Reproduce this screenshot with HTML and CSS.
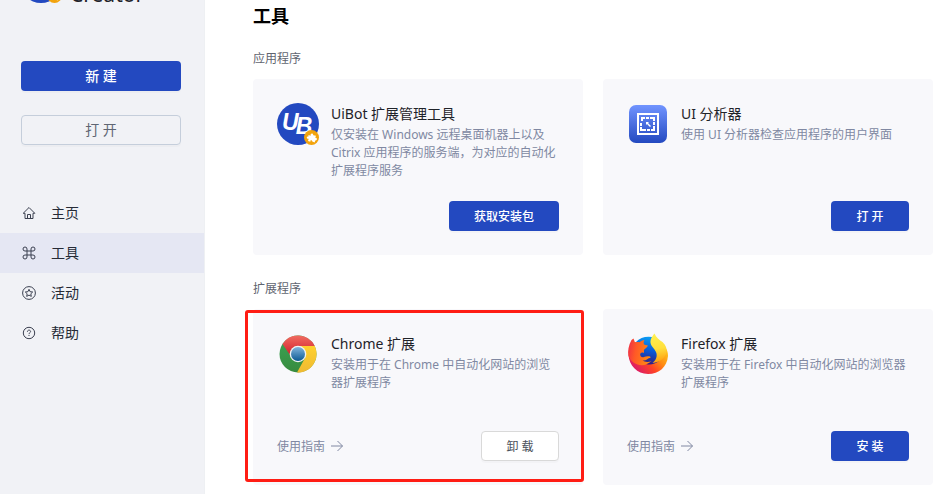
FILE: index.html
```html
<!DOCTYPE html>
<html lang="zh-CN">
<head>
<meta charset="utf-8">
<meta name="viewport" content="width=device-width, initial-scale=1">
<title>Creator</title>
<link rel="stylesheet" href="styles.css">
</head>
<body>
<svg class="defs" aria-hidden="true">
  <defs>
    <symbol id="arrow" viewBox="0 0 12 12">
      <path d="M0 6h11.500M6.500 1l5 5-5 5" fill="none" stroke="currentColor"/>
    </symbol>
    <symbol id="ubot" viewBox="0 0 42 42">
      <circle cx="21" cy="21" r="21" fill="#2349c0"/>
      <text x="5" y="27" class="ubot-text">U<tspan dx="-3" dy="4">B</tspan></text>
      <circle cx="34.500" cy="34.500" r="7.500" fill="#f2a30d"/>
      <path d="M31.500 32l2.200.8c-.8-2.500 2.500-3.200 2.600-.6l2.700.5-.8 2.100c2.300-.2 2.300 2.800.1 2.600l-.7 2-2.300-.9c-.3-1.800-2.300-1.500-1.900.2l-2.400-.7.700-2.200c-2.500.2-2.500-2.400-.2-2.200z" fill="#fff"/>
    </symbol>
  </defs>
</svg>
<div class="app">
  <aside class="sidebar">
    <div class="brand">
      <svg class="brand-logo" aria-hidden="true"><use href="#ubot"/></svg>
      <span class="brand-name">Creator</span>
    </div>
    <div class="actions">
      <button class="btn btn-primary btn-wide" type="button">新 建</button>
      <button class="btn btn-ghost btn-wide" type="button">打 开</button>
    </div>
    <nav class="nav">
      <a class="nav-item" href="#home">
        <svg class="nav-icon" viewBox="0 0 14 14"><path d="M1.200 7.300H3v5.200h8V7.300h1.800L7 1.500zM5.500 12.500V8.500h3v4"/></svg>
        主页
      </a>
      <a class="nav-item active" href="#tools" aria-current="page">
        <svg class="nav-icon" viewBox="0 0 14 14"><path d="M5 5H3a2 2 0 1 1 2-2v8a2 2 0 1 1-2-2h8a2 2 0 1 1-2 2V3a2 2 0 1 1 2 2z"/></svg>
        工具
      </a>
      <a class="nav-item" href="#events">
        <svg class="nav-icon" viewBox="0 0 14 14"><circle cx="7" cy="7" r="6.400"/><path d="M7 3.300l1.100 2.400 2.600.3-1.900 1.800.5 2.600L7 9.100l-2.300 1.300.5-2.600L3.300 6l2.600-.3z"/></svg>
        活动
      </a>
      <a class="nav-item" href="#help">
        <svg class="nav-icon" viewBox="0 0 14 14"><circle cx="7" cy="7" r="5.700"/><path d="M5.400 5.700c0-2.100 3.200-2.100 3.200-.1 0 1.100-1.600 1.100-1.600 2.500M7 9v1"/></svg>
        帮助
      </a>
    </nav>
  </aside>
  <main class="main">
    <h1 class="page-title">工具</h1>
    <section class="section">
      <h2 class="section-title">应用程序</h2>
      <div class="cards">
        <article class="card">
          <div class="card-body">
            <svg class="card-icon" aria-hidden="true"><use href="#ubot"/></svg>
            <div class="card-text">
              <h3 class="card-title">UiBot 扩展管理工具</h3>
              <p class="card-desc">仅安装在 Windows 远程桌面机器上以及 Citrix 应用程序的服务端，为对应的自动化扩展程序服务</p>
            </div>
          </div>
          <div class="card-foot">
            <button class="btn btn-primary" type="button">获取安装包</button>
          </div>
        </article>
        <article class="card">
          <div class="card-body">
            <svg class="card-icon" viewBox="0 0 42 42" aria-hidden="true">
              <defs><linearGradient id="tile" x2="0" y2="1"><stop stop-color="#7194ff"/><stop offset="1" stop-color="#2349c0"/></linearGradient></defs>
              <rect x="2" y="2" width="38" height="38" rx="7" fill="url(#tile)"/>
              <rect x="11" y="11" width="20" height="20" fill="none" stroke="#fff" stroke-width="2"/>
              <path d="M15 18v-3h3m1 0h3m1 0h4v3m0 1v3m0 1v4h-3m-1 0h-3m-1 0h-5v-3m0-1v-3" fill="none" stroke="#fff" stroke-width="2"/>
              <path d="M19 19h3l-1 1 3 3-1 1-3-3-1 1z" fill="#fff"/>
            </svg>
            <div class="card-text">
              <h3 class="card-title">UI 分析器</h3>
              <p class="card-desc">使用 UI 分析器检查应用程序的用户界面</p>
            </div>
          </div>
          <div class="card-foot">
            <button class="btn btn-primary" type="button">打 开</button>
          </div>
        </article>
      </div>
    </section>
    <section class="section">
      <h2 class="section-title">扩展程序</h2>
      <div class="cards">
        <article class="card highlighted">
          <div class="card-body">
            <svg class="card-icon" viewBox="0 0 42 42" aria-hidden="true">
              <defs>
                <linearGradient id="cr" x2="0" y2="1"><stop stop-color="#f06b60"/><stop offset="1" stop-color="#d3202c"/></linearGradient>
                <linearGradient id="cg" x2="0" y2="1"><stop stop-color="#3aa757"/><stop offset="1" stop-color="#388a3e"/></linearGradient>
                <linearGradient id="cy" x2="0" y2="1"><stop stop-color="#ffd02e"/><stop offset="1" stop-color="#efba32"/></linearGradient>
                <linearGradient id="cb" x2="0" y2="1"><stop stop-color="#80b4dc"/><stop offset="1" stop-color="#0c5a94"/></linearGradient>
              </defs>
              <circle cx="21" cy="21" r="18.500" fill="url(#cg)"/>
              <path d="M21 13h16.700A18.500 18.500 0 0 1 20 39.500l8-14.500z" fill="url(#cy)"/>
              <path d="M5.500 11A18.500 18.500 0 0 1 37.700 13H21a8 8 0 0 0-8 9z" fill="url(#cr)"/>
              <circle cx="21" cy="21" r="8.300" fill="#f3f3f5"/>
              <circle cx="21" cy="21" r="7" fill="url(#cb)"/>
            </svg>
            <div class="card-text">
              <h3 class="card-title">Chrome 扩展</h3>
              <p class="card-desc">安装用于在 Chrome 中自动化网站的浏览器扩展程序</p>
            </div>
          </div>
          <div class="card-foot">
            <a class="guide" href="#chrome-guide">使用指南 <svg class="arrow" aria-hidden="true"><use href="#arrow"/></svg></a>
            <button class="btn btn-default" type="button">卸 载</button>
          </div>
        </article>
        <article class="card">
          <div class="card-body">
            <svg class="card-icon" viewBox="0 0 42 42" aria-hidden="true">
              <defs>
                <linearGradient id="fo" x1=".9" y1=".2" x2=".15" y2=".75"><stop stop-color="#ffc21a"/><stop offset=".35" stop-color="#ff8a12"/><stop offset=".65" stop-color="#ff4326"/><stop offset="1" stop-color="#e0205e"/></linearGradient>
                <linearGradient id="fb" x1=".6" x2=".4" y2="1"><stop stop-color="#0aa2f5"/><stop offset=".5" stop-color="#0a5ad8"/><stop offset="1" stop-color="#33197c"/></linearGradient>
                <linearGradient id="ff" x1=".5" x2=".6" y2="1"><stop stop-color="#fff04f"/><stop offset=".5" stop-color="#ffe03c"/><stop offset="1" stop-color="#ff9a0b"/></linearGradient>
                <linearGradient id="fx" x2="1" y2=".2"><stop stop-color="#ee2b4a"/><stop offset=".4" stop-color="#ff5a26"/><stop offset="1" stop-color="#ff8a13"/></linearGradient>
              </defs>
              <path d="M5 9l29 1c4 3 7 7 7 13-1 11-9 18-20 18S2 32 1.500 22C1.500 16 3 12 5 9z" fill="url(#fo)"/>
              <path d="M9 9c6-7 19-7 25 0 4 7 2 15-2 19-5 4-12 5-16 1-4-6-8-13-7-20z" fill="url(#fb)"/>
              <path d="M4.500 7L6.500 5.500 8 9.500c1.500-.5 3-.6 4.500-.2C14 8 15.500 7.300 17.500 7c-1 1.500-1 3-.6 4.200 1 .9 2.800.6 4 1.400-.5 2-3 3-4 4.400.1 1.200.2 2 0 3-2.200-1-4 0-3.700 2 .5 2 2 2.500 3.800 2 1.800-.6 3.500-1.300 6-.5 1 .6.500 1.500-.5 1.600-2 .5-3.500 3-7 2.400 2 1.500 6 2 9 .5-7 7-19 5-23-5-1-5 0-10.500 3-16z" fill="url(#fx)"/>
              <path d="M27.500.5c-3 3.500-5 7-3.500 11 1.500 3.500 4.500 5 5.500 9 .8 4-1 7-4 9.500 8-1 13-5 14-11 .5-3-.5-7-4-10-3-2-6.500-4.500-8-8.500z" fill="url(#ff)"/>
            </svg>
            <div class="card-text">
              <h3 class="card-title">Firefox 扩展</h3>
              <p class="card-desc">安装用于在 Firefox 中自动化网站的浏览器扩展程序</p>
            </div>
          </div>
          <div class="card-foot">
            <a class="guide" href="#firefox-guide">使用指南 <svg class="arrow" aria-hidden="true"><use href="#arrow"/></svg></a>
            <button class="btn btn-primary" type="button">安 装</button>
          </div>
        </article>
      </div>
    </section>
  </main>
</div>
</body>
</html>
```
FILE: styles.css
```css
* {
  box-sizing: border-box;
}

body {
  margin: 0;
  overflow: hidden;
  background: #fff;
  color: #1f2329;
  font-family: "Noto Sans", "Noto Sans CJK SC", sans-serif;
  font-size: 12px;
  line-height: 18px;
}

h1, h2, h3, p {
  margin: 0;
  font-weight: 400;
}

.defs {
  position: absolute;
  width: 0;
  height: 0;
}

.ubot-text {
  fill: #fff;
  font: italic 700 23px "Liberation Sans", sans-serif;
}

.app {
  display: flex;
  min-height: 100vh;
}

/* The sidebar is scrolled so that only the foot of the brand shows. */
.sidebar {
  flex: 0 0 205px;
  margin-top: -39px;
  background: #f1f2f6;
  border-right: 1px solid #eef0f3;
}

.brand {
  display: flex;
  align-items: flex-end;
  gap: 8px;
  height: 42px;
  padding: 0 20px;
}

.brand-logo {
  width: 42px;
  height: 42px;
}

.brand-name {
  font-size: 21px;
  line-height: 18px;
}

.actions {
  display: flex;
  flex-direction: column;
  gap: 24px;
  margin: 58px 23px 48px 21px;
}

.btn {
  height: 30px;
  padding: 2px 24px 0;
  border: 1px solid transparent;
  border-radius: 4px;
  font: inherit;
  line-height: 18px;
  cursor: pointer;
  box-shadow: 0 2px 0 rgba(0, 0, 0, 0.02);
}

.btn-primary {
  background: #2349c0;
  color: #fff;
  font-weight: 500;
}

.btn-default {
  background: #fff;
  border-color: #d9d9d9;
  color: #4a4f5a;
}

.btn-ghost {
  background: transparent;
  border-color: #c5cedb;
  color: #5f6673;
}

.btn-wide {
  padding-top: 0;
  font-size: 14px;
}

.nav-item {
  display: flex;
  align-items: center;
  gap: 15px;
  height: 40px;
  padding: 0 22px;
  color: #262b36;
  font-size: 14px;
  text-decoration: none;
}

.nav-item.active {
  background: #e5e7f3;
}

.nav-icon {
  width: 14px;
  height: 14px;
  fill: none;
  stroke: #3b4050;
}

.main {
  flex: 1;
  padding: 3px 8px 0 48px;
}

.page-title {
  margin-bottom: 21px;
  color: #000;
  font-size: 18px;
  font-weight: 700;
  line-height: 26px;
}

.section {
  margin-bottom: 25px;
}

.section-title {
  margin-bottom: 11px;
  color: #5f6470;
  font-size: 12px;
}

.cards {
  display: grid;
  grid-template-columns: 1fr 1fr;
  gap: 20px;
}

.card {
  display: flex;
  flex-direction: column;
  min-height: 176px;
  padding: 24px;
  border-radius: 4px;
  background: #f8f8fb;
}

.card-body {
  display: flex;
  gap: 12px;
}

.card-icon {
  flex: none;
  width: 42px;
  height: 42px;
}

.card-title {
  margin-bottom: 1px;
  font-size: 14px;
  line-height: 22px;
}

.card-desc {
  color: #8088a2;
}

.card-foot {
  display: flex;
  align-items: center;
  margin-top: auto;
}

.card-foot .btn {
  min-width: 78px;
  margin-left: auto;
}

.guide {
  display: flex;
  align-items: center;
  gap: 6px;
  padding-top: 2px;
  color: #8088a2;
  text-decoration: none;
}

.arrow {
  width: 12px;
  height: 12px;
  margin-bottom: 2px;
}

.highlighted {
  position: relative;
}

.highlighted::after {
  content: "";
  position: absolute;
  inset: 1px -1px 3px -8px;
  border: 3px solid #ff1d14;
  border-radius: 3px;
  pointer-events: none;
}
```
